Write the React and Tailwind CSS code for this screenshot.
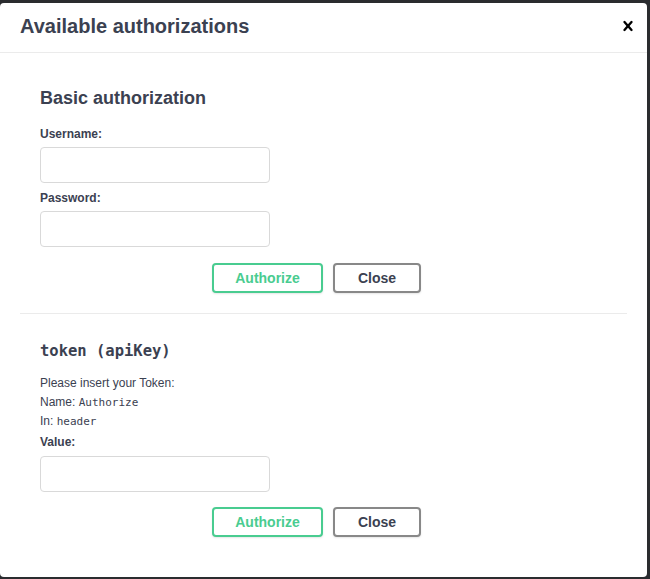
import React from 'react';

const sans = { fontFamily: '"Liberation Sans", Arial, sans-serif' };
const mono = { fontFamily: '"DejaVu Sans Mono", monospace' };

const CloseIcon = () => (
    <svg width="20" height="20" viewBox="0 0 20 20" fill="#000">
        <path d="M14.348 14.849a1.2 1.2 0 0 1-1.697 0L10 11.819l-2.651 3.029a1.2 1.2 0 1 1-1.697-1.697l2.758-3.15-2.759-3.152a1.2 1.2 0 1 1 1.697-1.697L10 8.183l2.651-3.031a1.2 1.2 0 1 1 1.697 1.697l-2.758 3.152 2.758 3.15a1.2 1.2 0 0 1 0 1.698z" />
    </svg>
);

const Field = ({ label, first, wide }) => (
    <div className={first ? '' : 'mt-[5px]'}>
        <label className="block text-[12px] leading-[18px] pt-px font-bold text-[#3b4151]">{label}</label>
        <input className={(wide ? 'mt-[5px]' : 'mt-[4px]') + ' block w-[230px] h-[36px] rounded-[4px] border border-[#d9d9d9] bg-white outline-none px-2'} />
    </div>
);

const Buttons = () => (
    <div className="flex justify-center">
        <button className="w-[111px] h-[30px] rounded-[4px] border-2 border-[#49cc90] bg-white text-[14px] font-bold text-[#49cc90] shadow-[0_1px_2px_rgba(0,0,0,0.1)]">
            Authorize
        </button>
        <button className="ml-[10px] mr-[14px] w-[88px] h-[30px] rounded-[4px] border-2 border-[#888] bg-white text-[14px] font-bold text-[#3b4151] shadow-[0_1px_2px_rgba(0,0,0,0.1)]">
            Close
        </button>
    </div>
);

const App = () => {
    return (
        <div className="w-[650px] h-[579px] bg-[#2a2c2f] pt-[3px] overflow-hidden" style={sans}>
            <div className="w-[647px] h-[574px] bg-white rounded-[4px] text-[#3b4151]">
                <div className="h-[50px] border-b border-[#ebebeb] flex items-center justify-between pl-[20px] pr-[10px]">
                    <h3 className="text-[20px] font-bold text-[#3b4151] pb-[3px]">Available authorizations</h3>
                    <button className="w-[20px] h-[20px] mr-[-1px] mb-[3px]"><CloseIcon /></button>
                </div>
                <div className="px-[20px] pt-[20px]">
                    <div className="px-[20px] pt-[10px] pb-[20px] border-b border-[#ebebeb]">
                        <h4 className="mt-[5px] text-[18px] leading-[21px] font-bold">Basic authorization</h4>
                        <div className="mt-[15px]">
                            <Field label="Username:" first />
                            <Field label="Password:" />
                        </div>
                        <div className="mt-[16px]">
                            <Buttons />
                        </div>
                    </div>
                    <div className="px-[20px] pt-[27px]">
                        <h4 className="text-[15.5px] leading-[21px] font-bold" style={mono}>token (apiKey)</h4>
                        <div className="mt-[12px] text-[12px] leading-[19px]">
                            <p>Please insert your Token:</p>
                            <p>Name: <code className="text-[11px]" style={mono}>Authorize</code></p>
                            <p>In: <code className="text-[11px]" style={mono}>header</code></p>
                        </div>
                        <div className="mt-[1px]">
                            <Field label="Value:" first wide />
                        </div>
                        <div className="mt-[15px]">
                            <Buttons />
                        </div>
                    </div>
                </div>
            </div>
        </div>
    );
};

export default App;
